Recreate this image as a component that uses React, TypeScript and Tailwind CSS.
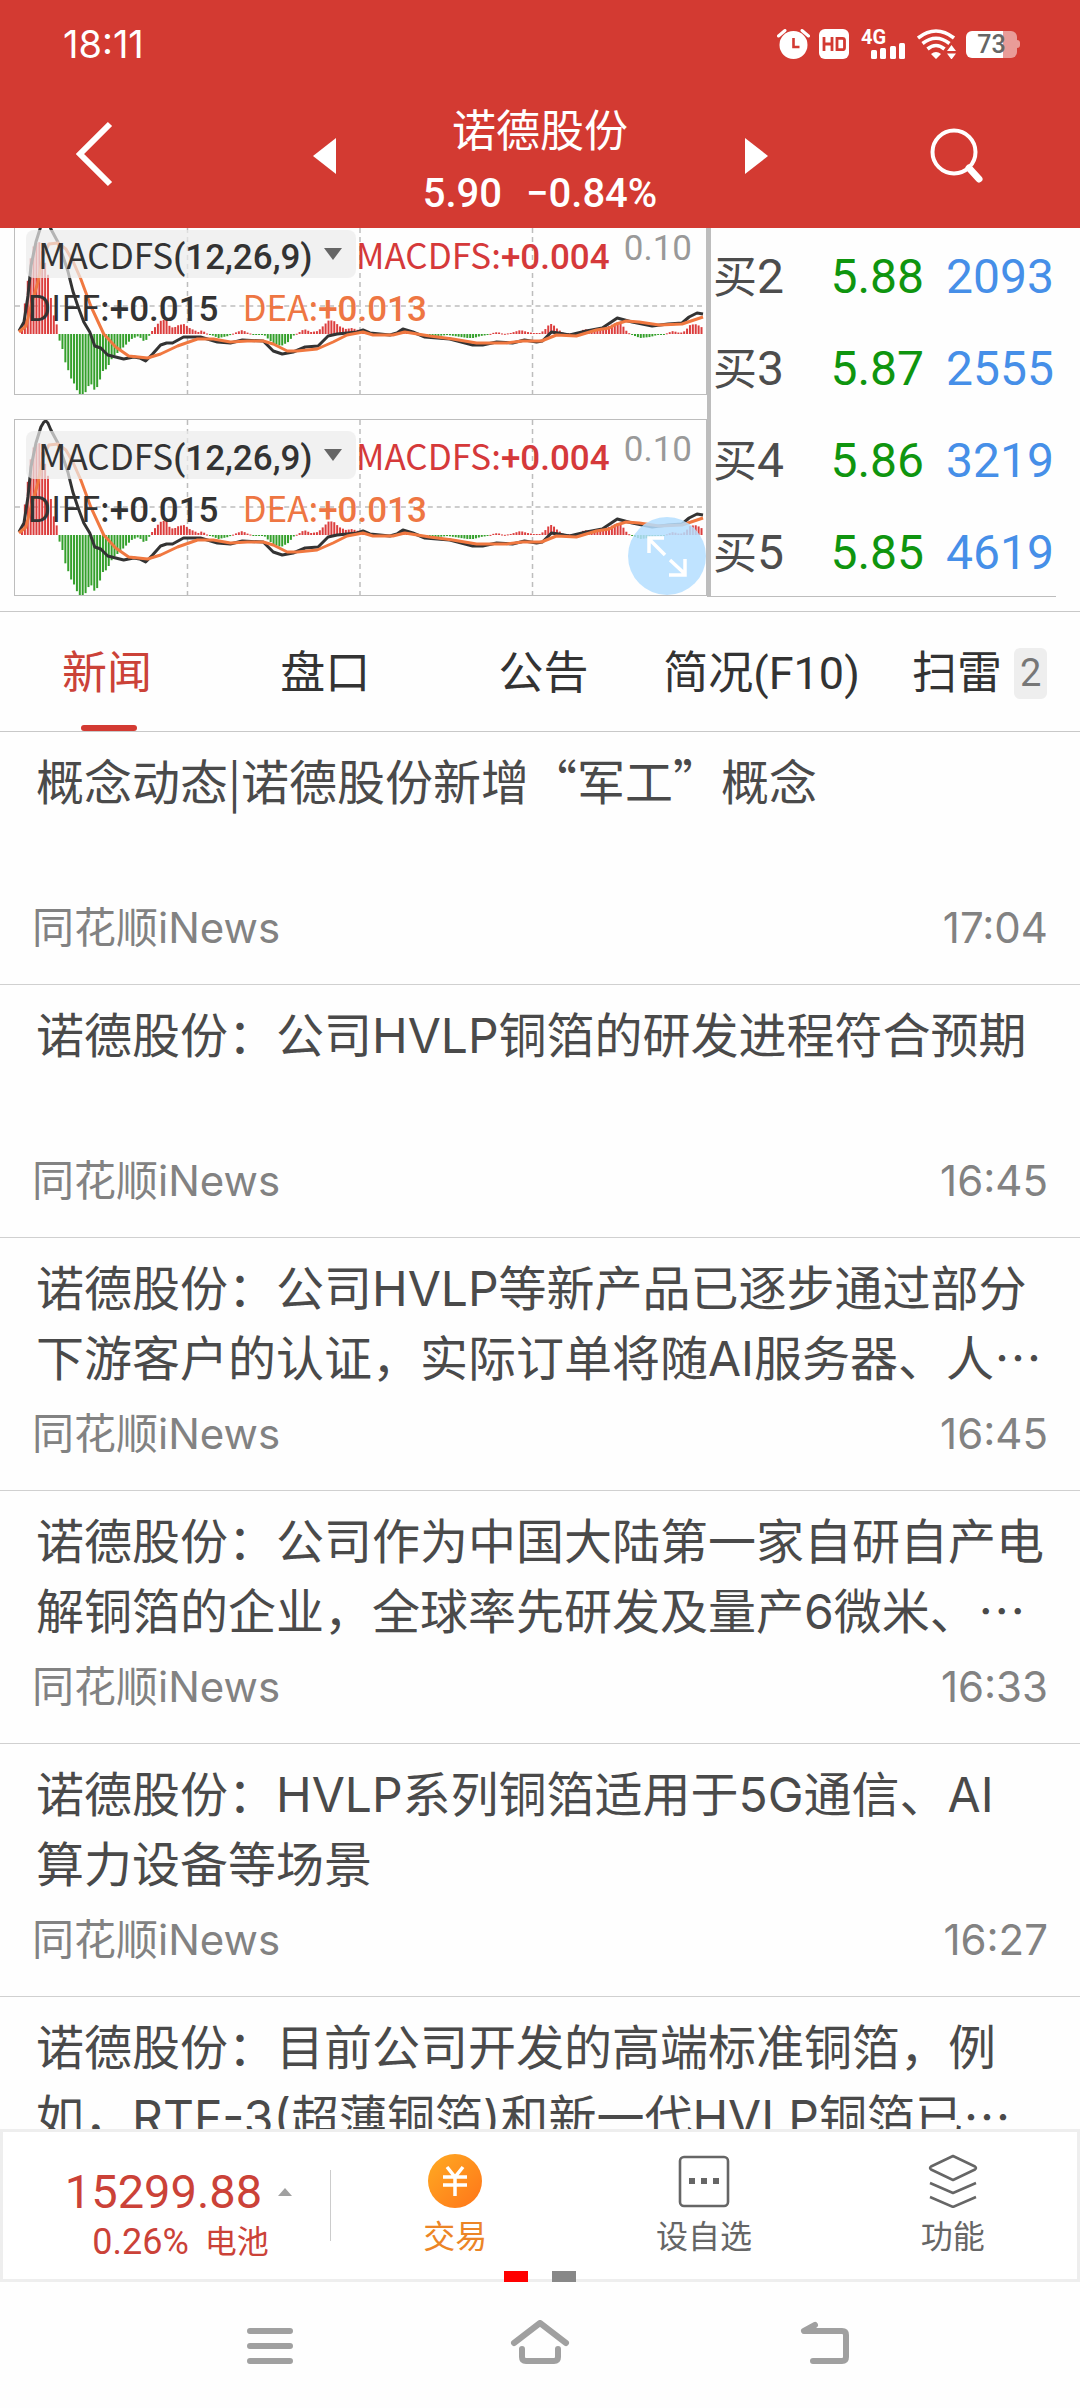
import type { ReactNode } from "react";

/**
 * Stock detail screen: MACD panels with the order book beside them,
 * a tab strip, the news feed and the index / action bar at the bottom.
 */

type Point = [number, number];

// MACD histogram key points: x inside the panel, bar height (+ up, - down)
const HIST: Point[] = [
  [5, 0], [11, 47], [15, 78], [18, 89], [23, 93], [26, 84], [29, 72], [32, 60], [35, 36], [38, 18], [41, 9], [42, 0],
  [43, -5], [46, -12], [49, -27], [52, -35], [55, -44], [58, -49], [61, -56], [64, -61], [69, -60], [72, -53],
  [75, -49], [78, -56], [81, -54], [84, -47], [86, -37], [89, -37], [93, -31], [96, -25], [99, -21], [103, -18],
  [109, -12], [116, -5], [123, -2], [129, -8], [133, -3], [135, 1], [138, 5], [141, 9], [146, 14], [151, 14],
  [154, 8], [158, 6], [163, 9], [169, 10], [174, 6], [183, 2], [187, 4], [190, 1], [193, 0], [196, -1], [203, -4],
  [213, -2], [219, 1], [227, 4], [233, 1], [241, -1], [249, -1], [253, -5], [259, -10], [266, -12], [273, -8],
  [279, -1], [283, 1], [289, 5], [296, 2], [303, 3], [308, 8], [314, 14], [319, 13], [324, 8], [331, 5], [337, 6],
  [343, 4], [349, 3], [356, 1], [363, 0], [373, 0], [383, 1], [386, 5], [389, 6], [394, 3], [403, 0], [413, -2],
  [423, -2], [433, -1], [446, -3], [453, -4], [459, -4], [466, -2], [473, -1], [478, 1], [483, 2], [489, 0],
  [496, 1], [506, 4], [513, 2], [519, 1], [526, 1], [531, 5], [535, 10], [538, 10], [543, 5], [549, 1], [556, 1],
  [563, 0], [568, 4], [573, 5], [579, 5], [589, 5], [599, 10], [604, 12], [608, 9], [613, 2], [618, -1],
  [626, -4], [636, -3], [643, -1], [651, 0], [656, 2], [659, 3], [666, 1], [671, 3], [676, 9], [681, 10],
  [686, 8], [690, 5],
];

const DIFF: Point[] = [
  [4, 112], [9, 103], [13, 77], [16, 47], [21, 23], [26, 7], [29, 2], [31, 1], [33, 3], [36, 10], [43, 23],
  [48, 37], [53, 52], [58, 72], [63, 87], [69, 103], [75, 113], [80, 127], [86, 129], [93, 136], [101, 138],
  [109, 140], [119, 138], [125, 139], [131, 142], [138, 135], [146, 126], [152, 124], [158, 124], [169, 118],
  [186, 118], [203, 123], [216, 124], [228, 121], [249, 122], [259, 132], [268, 135], [279, 133], [291, 128],
  [304, 127], [314, 117], [323, 115], [343, 113], [349, 111], [356, 114], [376, 116], [383, 114], [389, 110],
  [399, 113], [411, 118], [436, 120], [459, 126], [469, 126], [483, 123], [499, 124], [511, 121], [523, 123],
  [529, 122], [538, 113], [545, 114], [556, 116], [573, 112], [589, 109], [598, 103], [604, 99], [619, 103],
  [639, 107], [655, 105], [669, 104], [676, 98], [684, 94], [690, 95],
];

const DEA: Point[] = [
  [4, 113], [11, 107], [16, 87], [23, 63], [28, 37], [34, 25], [43, 24], [51, 30], [58, 42], [66, 60], [76, 87],
  [89, 115], [101, 128], [114, 137], [133, 139], [146, 135], [163, 127], [183, 120], [199, 120], [216, 123],
  [233, 122], [249, 122], [259, 125], [273, 132], [283, 132], [303, 130], [319, 123], [333, 116], [349, 113],
  [359, 116], [379, 116], [391, 113], [416, 117], [439, 120], [463, 124], [476, 124], [493, 124], [509, 122],
  [528, 122], [543, 116], [563, 117], [583, 111], [596, 109], [603, 105], [613, 102], [626, 103], [646, 106],
  [669, 105], [690, 98],
];

const BASELINE = 115;

function valueAt(points: Point[], x: number) {
  for (let i = 1; i < points.length; i++) {
    const [x0, v0] = points[i - 1];
    const [x1, v1] = points[i];
    if (x <= x1) return v0 + ((v1 - v0) * (x - x0)) / (x1 - x0);
  }
  return points[points.length - 1][1];
}

const BARS = Array.from({ length: 236 }, (_, i) => {
  const x = 6 + i * 2.9;
  return { x, v: valueAt(HIST, x) };
});

const toLine = (points: Point[]) => points.map((p) => p.join(",")).join(" ");

const BIDS = [
  { label: "2", price: "5.88", volume: "2093" },
  { label: "3", price: "5.87", volume: "2555" },
  { label: "4", price: "5.86", volume: "3219" },
  { label: "5", price: "5.85", volume: "4619" },
];

const TABS = [
  { name: "新闻", active: true },
  { name: "盘口" },
  { name: "公告" },
  { name: "简况(F10)" },
  { name: "扫雷", badge: "2" },
];

const NEWS = [
  { lines: ["概念动态|诺德股份新增“军工”概念"], time: "17:04" },
  { lines: ["诺德股份：公司HVLP铜箔的研发进程符合预期"], time: "16:45" },
  { lines: ["诺德股份：公司HVLP等新产品已逐步通过部分", "下游客户的认证，实际订单将随AI服务器、人…"], time: "16:45" },
  { lines: ["诺德股份：公司作为中国大陆第一家自研自产电", "解铜箔的企业，全球率先研发及量产6微米、…"], time: "16:33" },
  { lines: ["诺德股份：HVLP系列铜箔适用于5G通信、AI", "算力设备等场景"], time: "16:27" },
  { lines: ["诺德股份：目前公司开发的高端标准铜箔，例", "如，RTF-3(超薄铜箔)和新一代HVLP铜箔已…"], time: "16:20" },
];

// Quotes and the ellipsis need the full-width CJK glyphs
function CjkText({ text }: { text: string }) {
  return (
    <>
      {text.split(/([“”…|])/).map((part, i) =>
        /[“”…|]/.test(part) ? (
          <span key={i} className="font-['Noto_Sans_CJK_SC',sans-serif] leading-none">{part}</span>
        ) : (
          part
        )
      )}
    </>
  );
}

function StatusBar() {
  return (
    <div className="flex h-[84px] items-center justify-between pt-1 pl-[63px] pr-[60px]">
      <span className="font-[Inter,sans-serif] text-[38px] leading-[46px]">18:11</span>
      <div className="flex items-center gap-[9px]">
        <svg width="33" height="30" viewBox="0 0 33 30" fill="currentColor">
          <circle cx="16.500" cy="16" r="14" />
          <path d="M1.500 7 8 1.500M31.500 7 25 1.500" stroke="currentColor" strokeWidth="3" strokeLinecap="round" />
          <path d="M16.500 9v9h6" fill="none" stroke="#d33a32" strokeWidth="2.600" />
        </svg>
        <svg width="30" height="30" viewBox="0 0 30 30">
          <rect width="30" height="30" rx="6" fill="currentColor" />
          <path d="M5 8v14M13 8v14M5 15h8M18 9.300h5.500q2 0 2 2v7.400q0 2-2 2H18z" fill="none" stroke="#d33a32" strokeWidth="2.800" />
        </svg>
        <svg width="47" height="30" viewBox="0 0 47 30" fill="currentColor" className="ml-[3px] overflow-visible">
          <text x="0" y="15" fontSize="20" fontWeight="700">4G</text>
          <rect x="10" y="21" width="6" height="9" rx="1.500" />
          <rect x="19" y="19" width="6" height="11" rx="1.500" />
          <rect x="29" y="17" width="6" height="13" rx="1.500" />
          <rect x="38" y="14" width="6" height="16" rx="1.500" />
        </svg>
        <svg width="40" height="30" viewBox="0 0 40 30" fill="none" stroke="currentColor" strokeWidth="3.600">
          <path d="M1 9Q19-5 37 9M5.500 14.500Q19 4 32.500 14.500M10.500 20Q19 13 27.500 20" />
          <path d="M14 25q5-4 10 0l-5 5zM30 22l4.500-6 4.500 6zM30 24.500h9l-4.500 6z" fill="currentColor" stroke="none" />
        </svg>
        <div className="flex items-center">
          <div className="h-[27px] w-[51px] rounded-[6px] bg-linear-to-r from-white from-73% to-[#e99c98] to-73% text-center text-[25px] leading-[27px] font-medium text-[#666]">
            73
          </div>
          <div className="h-2 w-[3px] rounded-r-sm bg-[#e99c98]" />
        </div>
      </div>
    </div>
  );
}

function Header() {
  return (
    <header className="shrink-0 bg-[#d33a32] text-white">
      <StatusBar />
      <div className="grid h-36 grid-cols-5 items-center">
        <button aria-label="返回" className="ml-[76px] justify-self-start pb-1">
          <svg width="38" height="66" viewBox="0 0 38 66" fill="none" stroke="currentColor" strokeWidth="6">
            <path d="M34 3 4 33l30 30" />
          </svg>
        </button>
        <button aria-label="上一只" className="justify-self-center">
          <svg width="23" height="36" viewBox="0 0 23 36" fill="currentColor"><path d="M23 0v36L0 18z" /></svg>
        </button>
        <div className="flex flex-col items-center pt-4 whitespace-nowrap">
          <h1 className="text-[44px] leading-[60px]">诺德股份</h1>
          <p className="flex gap-6 text-[40px] leading-[64px] font-medium">
            <span>5.90</span>
            <span>−0.84%</span>
          </p>
        </div>
        <button aria-label="下一只" className="justify-self-center">
          <svg width="23" height="36" viewBox="0 0 23 36" fill="currentColor"><path d="M0 0v36l23-18z" /></svg>
        </button>
        <button aria-label="搜索" className="mr-[96px] justify-self-end">
          <svg width="54" height="56" viewBox="0 0 54 56" fill="none" stroke="currentColor">
            <circle cx="24" cy="24" r="21.500" strokeWidth="4" />
            <path d="m39 40 10 11" strokeWidth="7" strokeLinecap="round" />
          </svg>
        </button>
      </div>
    </header>
  );
}

function Num({ children }: { children: ReactNode }) {
  return <span className="font-[Roboto,sans-serif] text-[35px] leading-none font-medium">{children}</span>;
}

function MacdPanel({ children }: { children?: ReactNode }) {
  return (
    <div className="relative h-[177px] w-full shrink-0 border border-[#bdbdbd]">
      <svg className="block h-full w-full" viewBox="0 0 693 175" preserveAspectRatio="none">
        <g stroke="#bdbdbd" strokeWidth="1.500" strokeDasharray="5 4">
          <path d="M173 0v175M346 0v175M519 0v175M0 87h693" />
        </g>
        {BARS.map(({ x, v }) => (
          <rect
            key={x}
            x={x}
            y={v > 0 ? BASELINE - v : BASELINE}
            width="2"
            height={Math.max(Math.abs(v), 1)}
            fill={v > 0 ? "#dc3e3e" : "#35a02c"}
          />
        ))}
        <polyline points={toLine(DIFF)} fill="none" stroke="#333" strokeWidth="3" strokeLinejoin="round" />
        <polyline points={toLine(DEA)} fill="none" stroke="#f07840" strokeWidth="3" strokeLinejoin="round" />
      </svg>
      {/* Readouts over the plot */}
      <div className="absolute inset-0 whitespace-nowrap font-['Noto_Sans_CJK_SC',sans-serif] text-[35px] text-[#333]">
        <div className="flex h-[59px] items-start pt-[11px] pl-[11px]">
          <button className="flex h-12 w-[330px] shrink-0 items-center justify-between rounded-lg bg-[#ebebeb]/70 pr-[14px] pl-3 leading-[48px]">
            <span>
              MACDFS<Num>(12,26,9)</Num>
            </span>
            <svg width="18" height="12" viewBox="0 0 18 12" fill="#666"><path d="M0 0h18l-9 12z" /></svg>
          </button>
          <span className="leading-[48px] text-[#d5393a]">
            MACDFS:<Num>+0.004</Num>
          </span>
          <span className="ml-auto pr-[14px] font-[Roboto,sans-serif] text-[35px] leading-[38px] text-[#999]">0.10</span>
        </div>
        <div className="flex gap-6 pt-1 pl-3 leading-[48px]">
          <span>
            DIFF:<Num>+0.015</Num>
          </span>
          <span className="text-[#ee7643]">
            DEA:<Num>+0.013</Num>
          </span>
        </div>
      </div>
      {children}
    </div>
  );
}

function OrderBook() {
  return (
    <div className="mr-6 w-[349px] shrink-0 border-b border-l-4 border-[#bdbdbd]">
      <table className="w-full">
        <tbody>
          {BIDS.map((bid) => (
            <tr key={bid.label} className="h-[92px] text-[48px] leading-none">
              <th scope="row" className="pt-1.5 pl-[2px] text-left font-normal text-[#4d4d4d]">
                <span className="text-[44px]">买</span>
                {bid.label}
              </th>
              <td className="pt-1.5 text-right text-[#0f950f]">{bid.price}</td>
              <td className="w-[132px] pt-1.5 pr-[2px] text-right text-[#468fe8]">{bid.volume}</td>
            </tr>
          ))}
        </tbody>
      </table>
    </div>
  );
}

function BottomBar() {
  return (
    <footer className="relative flex h-[153px] shrink-0 border-[3px] border-[#eee] bg-white">
      <button className="flex w-[327px] shrink-0 flex-col justify-center gap-2 pt-4 text-[#cb4238]">
        <span className="flex items-center justify-center gap-4 pl-6 text-[47px] leading-[48px]">
          15299.88
          <svg width="14" height="8" viewBox="0 0 14 8" fill="#a0a0a0"><path d="M7 0l7 8H0z" /></svg>
        </span>
        <span className="flex items-center justify-center gap-4 pl-7 text-[36px] leading-[36px]">
          0.26% <span className="text-[32px]">电池</span>
        </span>
      </button>
      <div className="my-[38px] w-px bg-[#ccc]" />
      <div className="grid flex-1 grid-cols-3 text-[32px] leading-[40px] text-[#666]">
        <button className="flex flex-col items-center gap-[9px] pt-[22px] text-[#ec8526]">
          <svg width="54" height="54" viewBox="0 0 54 54">
            <defs>
              <linearGradient id="coin" x1="0" y1="0" x2="1" y2="1">
                <stop offset="0" stopColor="#ffab22" />
                <stop offset="1" stopColor="#ff7519" />
              </linearGradient>
            </defs>
            <circle cx="27" cy="27" r="27" fill="url(#coin)" />
            <path d="M19 13l8 10 8-10M15 23h24M15 31h24M27 23v19" fill="none" stroke="#fff" strokeWidth="3.500" />
          </svg>
          交易
        </button>
        <button className="flex flex-col items-center gap-[9px] pt-[22px]">
          <svg width="54" height="54" viewBox="0 0 54 54" fill="none" stroke="#666" strokeWidth="2.600">
            <rect x="3" y="3" width="48" height="49" rx="4" />
            <path d="M12 27h6M24 27h6M36 27h6" strokeWidth="6" />
          </svg>
          设自选
        </button>
        <button className="flex flex-col items-center gap-[9px] pt-[22px]">
          <svg width="54" height="54" viewBox="0 0 54 54" fill="none" stroke="#666" strokeWidth="2.500" strokeLinejoin="round">
            <path d="M27 2 49 12.500q2 1.500 0 3L27 26 5 15.500q-2-1.500 0-3zM4 29l23 10 23-10M4 43l23 10 23-10" />
          </svg>
          功能
        </button>
      </div>
      {/* Page indicator */}
      <div className="absolute -bottom-[3px] left-1/2 flex -translate-x-1/2 gap-6">
        <span className="h-[11px] w-6 bg-[#f00]" />
        <span className="h-[11px] w-6 bg-[#888]" />
      </div>
    </footer>
  );
}

function SystemNav() {
  return (
    <nav className="grid h-[126px] shrink-0 grid-cols-3 items-center justify-items-center bg-[#fefefe] px-[12.500%] pb-1.5">
      <button aria-label="最近任务">
        <svg width="46" height="44" viewBox="0 0 46 44" fill="none" stroke="#a0a0a0" strokeWidth="6" strokeLinecap="round">
          <path d="M3 11h40M3 26h40M3 41h40" />
        </svg>
      </button>
      <button aria-label="主屏幕">
        <svg width="60" height="44" viewBox="0 0 60 44" fill="none" stroke="#a0a0a0" strokeWidth="6" strokeLinecap="round" strokeLinejoin="round">
          <path d="M4 23 30 3l26 20M12 29v8q0 4 4 4h28q4 0 4-4v-8" />
        </svg>
      </button>
      <button aria-label="后退">
        <svg width="80" height="44" viewBox="0 0 80 44" fill="none" stroke="#a0a0a0" strokeWidth="6" strokeLinecap="round" strokeLinejoin="round">
          <path d="M45 5l-11 6h38q4 0 4 4v22q0 4-4 4H43" />
        </svg>
      </button>
    </nav>
  );
}

export default function App() {
  return (
    <div className="flex h-screen flex-col overflow-hidden bg-[#fefefe] font-[Roboto,'Noto_Sans_CJK_SC',sans-serif]">
      <Header />

      {/* ── Charts and order book ── */}
      <section className="flex shrink-0 border-b border-[#c8c8c8] pb-[14px] pl-[14px]">
        <div className="flex h-[368px] min-w-0 flex-1 flex-col justify-end gap-[24px] overflow-hidden">
          <MacdPanel />
          <MacdPanel>
            <button
              aria-label="全屏"
              className="absolute right-0 bottom-0 flex size-[78px] items-center justify-center rounded-full bg-[#b4deff]/85"
            >
              <svg width="42" height="42" viewBox="0 0 42 42" fill="none" stroke="#fff" strokeWidth="3.500">
                <path d="M19 20 3 4M3 18V3h15M24 25l15 14M39 24v16H23" />
              </svg>
            </button>
          </MacdPanel>
        </div>
        <OrderBook />
      </section>

      {/* ── Tabs ── */}
      <div role="tablist" className="flex h-[120px] shrink-0 overflow-hidden border-b border-[#c8c8c8] text-[45px] text-[#333]">
        {TABS.map((tab) => (
          <button
            key={tab.name}
            role="tab"
            aria-selected={!!tab.active}
            className={`relative flex w-[20.200%] shrink-0 items-center justify-center gap-3 pt-1 pr-1 whitespace-nowrap ${
              tab.active ? "text-[#cb4238]" : ""
            }`}
          >
            {tab.name}
            {tab.badge && (
              <span className="rounded-md bg-[#eee] px-1.5 text-[38px] leading-[51px] text-[#777]">{tab.badge}</span>
            )}
            {tab.active && (
              <span className="absolute bottom-0 left-1/2 h-1.5 w-14 -translate-x-1/2 rounded-full bg-[#d33a32]" />
            )}
          </button>
        ))}
      </div>

      {/* ── News feed ── */}
      <main className="min-h-0 flex-1 overflow-hidden font-[Inter,'Noto_Sans_CJK_SC',sans-serif]">
        {NEWS.map((item) => (
          <article key={item.lines[0]} className="border-b border-[#d0d0d0] px-8 pt-4 pb-7">
            <a href="#news" className="block min-h-[140px] pl-1 text-[48px] leading-[70px] whitespace-nowrap text-[#4a4a4a]">
              {item.lines.map((line) => (
                <span key={line} className="block">
                  <CjkText text={line} />
                </span>
              ))}
            </a>
            <p className="mt-3 flex justify-between text-[42px] leading-[56px] text-[#828282]">
              <span>同花顺iNews</span>
              <time>{item.time}</time>
            </p>
          </article>
        ))}
      </main>

      <BottomBar />
      <SystemNav />
    </div>
  );
}
